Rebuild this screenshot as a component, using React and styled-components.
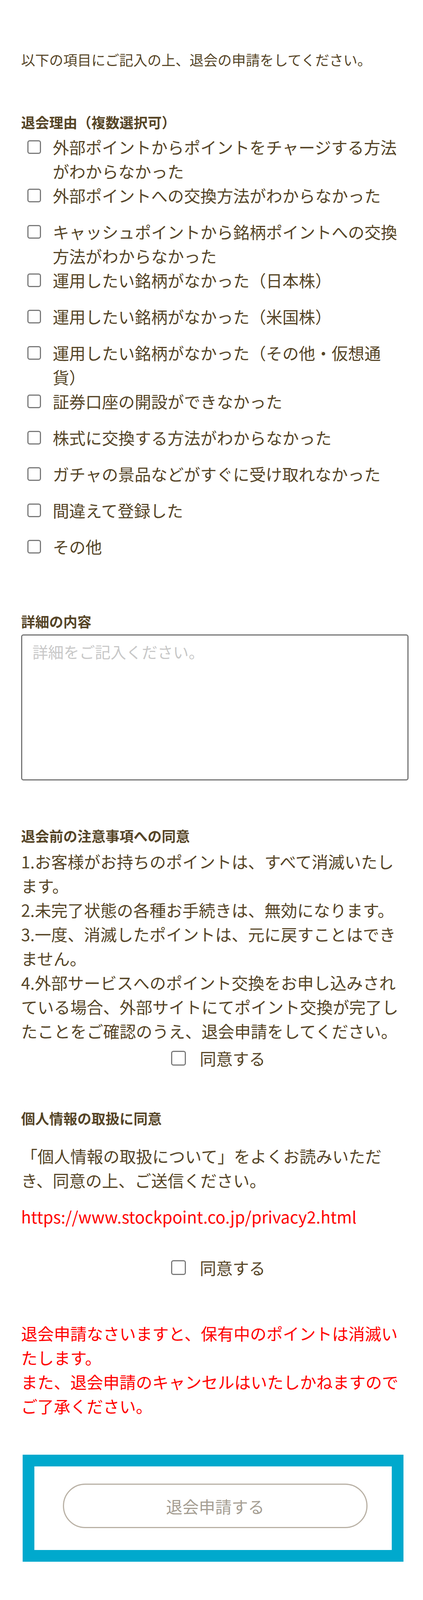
import React from 'react'
import styled, { createGlobalStyle } from 'styled-components'

const GlobalStyle = createGlobalStyle`
  html, body {
    margin: 0;
    padding: 0;
    background: #fff;
  }
  body {
    font-family: "Noto Sans CJK JP", "Noto Sans", sans-serif;
    color: #564527;
  }
  * {
    box-sizing: border-box;
  }
`

const Page = styled.div`
  width: 100%;
  padding: 121px 54px 90px 54px;
`

const Intro = styled.p`
  margin: 0 0 98px;
  font-size: 36px;
  line-height: 62px;
`

const Section = styled.section`
  margin-bottom: ${({ $gap }) => $gap}px;
`

const SectionTitle = styled.h2`
  margin: 0;
  font-size: 36px;
  font-weight: 700;
  line-height: 62px;
`

const ReasonList = styled.ul`
  list-style: none;
  margin: 2px 0 0;
  padding: 0;
`

const ReasonItem = styled.li`
  display: flex;
  align-items: flex-start;
  min-height: 93px;
  font-size: 42px;
  line-height: 62px;
`

const Check = styled.input.attrs({ type: 'checkbox' })`
  appearance: none;
  flex: none;
  width: ${({ $size }) => $size}px;
  height: ${({ $size }) => $size}px;
  margin: 0;
  border: 3px solid #7a7a7a;
  border-radius: 6px;
  background: #fff;
`

const ReasonCheck = styled(Check)`
  margin: 14px 30px 0 16px;
`

const Detail = styled.textarea`
  display: block;
  width: 992px;
  height: 374px;
  margin: 3px 0 0;
  padding: 12px 26px;
  border: 3px solid #767676;
  border-radius: 6px;
  font-family: "Noto Sans CJK JP", "Noto Sans", sans-serif;
  font-size: 40px;
  color: #564527;
  resize: none;

  &::placeholder {
    color: #c8c8c8;
  }
`

const Notes = styled.div`
  margin-top: 4px;
  font-size: 42px;
  line-height: 62px;
`

const AgreeRow = styled.label`
  display: flex;
  justify-content: center;
  align-items: center;
  gap: 35px;
  margin-top: ${({ $top }) => $top}px;
  padding-left: 35px;
  font-size: 42px;
  line-height: 62px;
`

const Paragraph = styled.p`
  margin: 35px 0 0;
  font-size: 42px;
  line-height: 62px;
`

const PolicyLink = styled.a`
  display: block;
  margin-top: 31px;
  font-size: 42px;
  line-height: 62px;
  color: #ff0000;
  text-decoration: none;
`

const Warning = styled.p`
  margin: 0;
  font-size: 42px;
  line-height: 62px;
  color: #ff0000;
`

const SubmitFrame = styled.div`
  width: 975px;
  margin-left: 4px;
  padding: 44px 0 56px;
  border: 30px solid #00a9cd;
`

const SubmitButton = styled.button`
  display: block;
  width: 780px;
  height: 114px;
  margin: 0 0 0 73px;
  border: 3px solid #b9b1a5;
  border-radius: 60px;
  background: #fff;
  font-family: "Noto Sans CJK JP", "Noto Sans", sans-serif;
  font-size: 42px;
  color: #a59e93;
`

const reasons = [
  '外部ポイントからポイントをチャージする方法がわからなかった',
  '外部ポイントへの交換方法がわからなかった',
  'キャッシュポイントから銘柄ポイントへの交換方法がわからなかった',
  '運用したい銘柄がなかった（日本株）',
  '運用したい銘柄がなかった（米国株）',
  '運用したい銘柄がなかった（その他・仮想通貨）',
  '証券口座の開設ができなかった',
  '株式に交換する方法がわからなかった',
  'ガチャの景品などがすぐに受け取れなかった',
  '間違えて登録した',
  'その他',
]

const notes = [
  '1.お客様がお持ちのポイントは、すべて消滅いたします。',
  '2.未完了状態の各種お手続きは、無効になります。',
  '3.一度、消滅したポイントは、元に戻すことはできません。',
  '4.外部サービスへのポイント交換をお申し込みされている場合、外部サイトにてポイント交換が完了したことをご確認のうえ、退会申請をしてください。',
]

export default function App() {
  return (
    <>
      <GlobalStyle />
      <Page>
        <Intro>以下の項目にご記入の上、退会の申請をしてください。</Intro>

        <Section $gap={98}>
          <SectionTitle>退会理由（複数選択可）</SectionTitle>
          <ReasonList>
            {reasons.map((reason) => (
              <ReasonItem key={reason}>
                <ReasonCheck $size={35} />
                <span>{reason}</span>
              </ReasonItem>
            ))}
          </ReasonList>
        </Section>

        <Section $gap={110}>
          <SectionTitle>詳細の内容</SectionTitle>
          <Detail placeholder="詳細をご記入ください。" />
        </Section>

        <Section $gap={91}>
          <SectionTitle>退会前の注意事項への同意</SectionTitle>
          <Notes>
            {notes.map((note) => (
              <div key={note}>{note}</div>
            ))}
          </Notes>
          <AgreeRow $top={8}>
            <Check $size={38} />
            <span>同意する</span>
          </AgreeRow>
        </Section>

        <Section $gap={106}>
          <SectionTitle>個人情報の取扱に同意</SectionTitle>
          <Paragraph>「個人情報の取扱について」をよくお読みいただき、同意の上、ご送信ください。</Paragraph>
          <PolicyLink href="#">https://www.stockpoint.co.jp/privacy2.html</PolicyLink>
          <AgreeRow $top={69}>
            <Check $size={38} />
            <span>同意する</span>
          </AgreeRow>
        </Section>

        <Section $gap={94}>
          <Warning>
            退会申請なさいますと、保有中のポイントは消滅いたします。
            <br />
            また、退会申請のキャンセルはいたしかねますのでご了承ください。
          </Warning>
        </Section>

        <SubmitFrame>
          <SubmitButton type="button">退会申請する</SubmitButton>
        </SubmitFrame>
      </Page>
    </>
  )
}
